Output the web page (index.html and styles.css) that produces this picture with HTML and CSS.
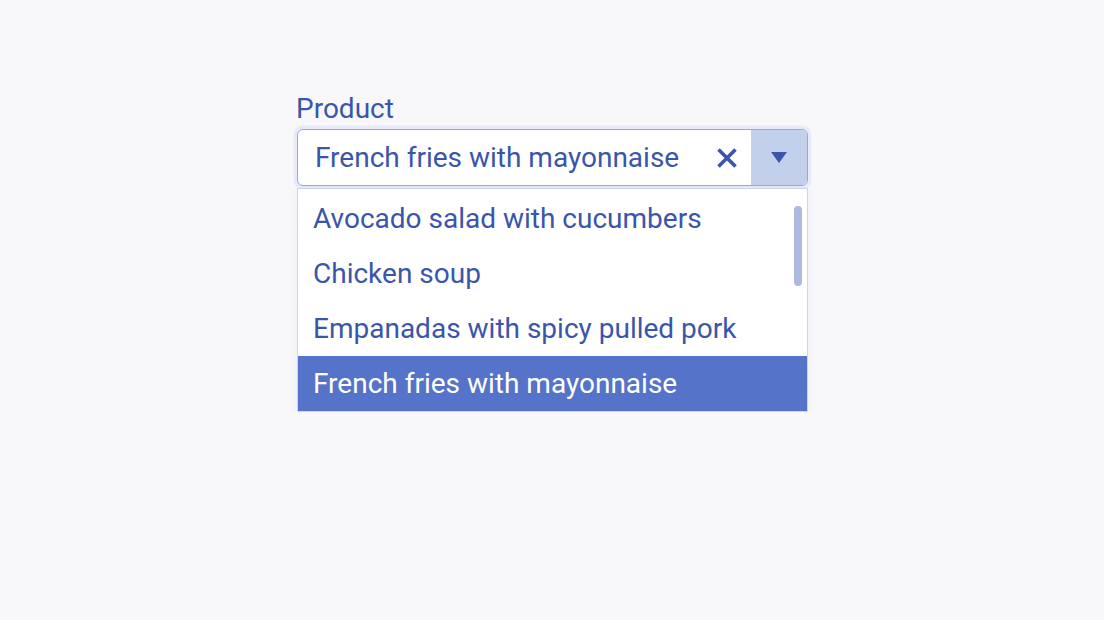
FILE: index.html
```html
<!DOCTYPE html>
<html lang="en">
<head>
<meta charset="utf-8">
<title>Product</title>
<link rel="stylesheet" href="styles.css">
</head>
<body>
<div class="page">
  <div class="field">
    <label class="label" for="product">Product</label>
    <div class="combo">
      <div class="value" id="product">French fries with mayonnaise</div>
      <button class="clear" type="button" aria-label="Clear">
        <svg width="22" height="22" viewBox="0 0 22 22"><path d="M2.5 2.5 L19.5 19.5 M19.5 2.5 L2.5 19.5" stroke="#3a55ab" stroke-width="3.6" stroke-linecap="butt" fill="none"/></svg>
      </button>
      <button class="toggle" type="button" aria-label="Toggle">
        <svg width="16" height="11" viewBox="0 0 16 11"><path d="M0 0 H16 L8 11 Z" fill="#3a55ab"/></svg>
      </button>
    </div>
    <ul class="listbox">
      <li class="option">Avocado salad with cucumbers</li>
      <li class="option">Chicken soup</li>
      <li class="option">Empanadas with spicy pulled pork</li>
      <li class="option selected">French fries with mayonnaise</li>
      <li class="scrollbar" aria-hidden="true"></li>
    </ul>
  </div>
</div>
</body>
</html>
```
FILE: styles.css
```css
html, body {
  margin: 0;
  padding: 0;
  background: #f8f8fb;
}
body {
  font-family: Roboto, "Noto Sans", sans-serif;
  color: #3a55ab;
}
.page {
  padding: 89px 0 0 297px;
}
.field {
  width: 511px;
  display: flex;
  flex-direction: column;
}
.label {
  font-size: 28px;
  line-height: 40px;
  height: 40px;
  margin-left: -1px;
}
.combo {
  display: flex;
  align-items: stretch;
  height: 55px;
  border: 1.5px solid #97a8d8;
  border-radius: 6px;
  background: #ffffff;
  box-shadow: 0 0 0 3.5px #e8ebf7;
  overflow: hidden;
}
.value {
  flex: 1;
  display: flex;
  align-items: center;
  padding-left: 17px;
  font-size: 28px;
}
.clear {
  width: 48px;
  border: none;
  background: transparent;
  padding: 0;
  display: flex;
  align-items: center;
  justify-content: center;
}
.toggle {
  width: 56px;
  border: none;
  background: #c3d0ec;
  padding: 0;
  display: flex;
  align-items: center;
  justify-content: center;
}
.listbox {
  position: relative;
  list-style: none;
  margin: 2px 0 0 0;
  padding: 2px 0 0 0;
  background: #ffffff;
  border: 1px solid #ccd4ee;
  box-shadow: 0 2px 8px rgba(90, 110, 180, 0.08);
}
.option {
  height: 55px;
  display: flex;
  align-items: center;
  padding-left: 15px;
  font-size: 28px;
}
.option.selected {
  background: #5573c8;
  color: #ffffff;
}
.scrollbar {
  position: absolute;
  top: 17px;
  right: 5px;
  width: 8px;
  height: 80px;
  border-radius: 4px;
  background: #adb9e0;
}
```
